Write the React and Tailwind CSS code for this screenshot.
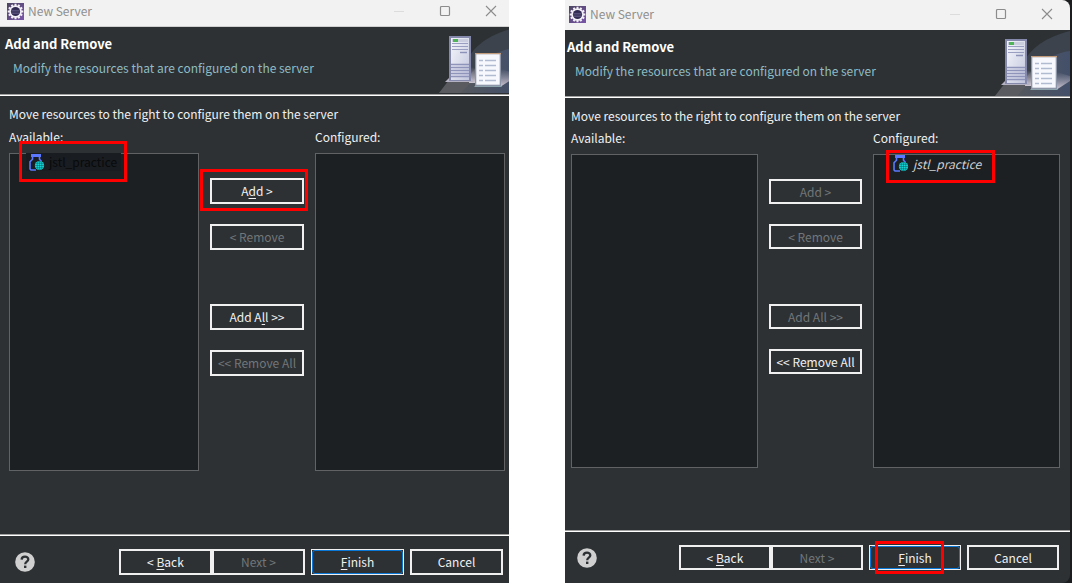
import React from "react";

function EclipseIcon() {
  const teeth = Array.from({ length: 12 }, (_, i) => i * 30);
  return (
    <svg width="17" height="17" viewBox="0 0 17 17" className="shrink-0" aria-hidden="true">
      <defs>
        <linearGradient id="ecl" x1="0" y1="0" x2="1" y2="1">
          <stop offset="0" stopColor="#4b4560" />
          <stop offset="1" stopColor="#7a55ab" />
        </linearGradient>
      </defs>
      <rect width="17" height="17" fill="url(#ecl)" />
      {teeth.map((a) => (
        <rect key={a} x="7.5" y="0.7" width="2" height="3" fill="#f1eef5" transform={`rotate(${a} 8.5 8.5)`} />
      ))}
      <circle cx="8.5" cy="8.5" r="6.3" fill="#f1eef5" />
      <circle cx="8.5" cy="8.5" r="4.6" fill="#2f2850" />
      <path d="M4.4 7.4h8.2M4.1 9h8.8M4.7 10.6h7.6" stroke="#6d6690" strokeWidth="0.7" />
    </svg>
  );
}

function ServerArt({ width }) {
  return (
    <svg width={width} height="66" viewBox={`0 0 ${width} 66`} className="block shrink-0 self-start" aria-hidden="true">
      <defs>
        <linearGradient id="beam" x1="0" y1="0" x2="1" y2="0">
          <stop offset="0" stopColor="#55585d" />
          <stop offset="1" stopColor="#43506a" />
        </linearGradient>
        <linearGradient id="tower" x1="0" y1="0" x2="1" y2="1">
          <stop offset="0" stopColor="#f4f5fb" />
          <stop offset="1" stopColor="#c3c7dd" />
        </linearGradient>
        <linearGradient id="glow" x1="0" y1="0" x2="0" y2="1">
          <stop offset="0" stopColor="#b9b3c4" stopOpacity="0" />
          <stop offset="1" stopColor="#cfc8d4" />
        </linearGradient>
      </defs>
      <path d="M75 1C44 9 34 22 26 36L0 66h75z" fill="#3c434c" />
      <path d="M75 21C48 25 32 42 20 66h55z" fill="url(#beam)" />
      <path d="M0 66L10 53h24l-12 13z" fill="#5a5b60" />
      <path d="M32 40l6 2v14h-8z" fill="url(#glow)" />
      <path d="M62 42l13 4v5l-14 9z" fill="url(#glow)" />
      <path d="M6 55l4-4h22l3 4z" fill="#b4b2c2" />
      <rect x="10" y="9" width="22" height="45" fill="#8589ab" />
      <rect x="12" y="11" width="18" height="42" fill="url(#tower)" />
      <path d="M13 16.5h16M13 19.5h16M13 22.5h16" stroke="#9a9ec0" />
      <rect x="13" y="12" width="16" height="3" fill="#c9cddd" />
      <rect x="14" y="12" width="5" height="3" fill="#4fb457" />
      <path d="M21 25.5h7" stroke="#8d92b8" strokeWidth="1.4" />
      <path d="M12 37.5h18M12 40.5h18M12 43.5h18M12 46.5h18M12 49.5h18" stroke="#8f94bb" strokeWidth="1.3" />
      <path d="M35 60l3-3h23l2 3z" fill="#8fa5ad" />
      <rect x="36" y="26" width="26" height="33" fill="#8d95a8" />
      <rect x="36" y="26" width="26" height="1.3" fill="#c39c7b" />
      <rect x="37.3" y="27.3" width="23.4" height="30.4" fill="#f6f8fd" />
      <path d="M40 33.5h4M46 33.5h11M40 38.5h4M46 38.5h11M40 43.5h4M46 43.5h11M40 48.5h4M46 48.5h11M40 53.5h4M46 53.5h11" stroke="#b0bbd2" strokeWidth="1.6" />
    </svg>
  );
}

function ModuleIcon() {
  return (
    <svg width="16" height="17" viewBox="0 0 16 17" className="shrink-0" aria-hidden="true">
      <rect x="2" y="0" width="10" height="3" fill="#5b78ff" />
      <path d="M3.500 3v2.200L1 7.800V15l1 1H7M10.500 3v2.200L12.500 7.500" fill="none" stroke="#5b78ff" strokeWidth="1.600" />
      <circle cx="10.500" cy="11.500" r="4.600" fill="#10d8d8" />
      <path d="M6 11.500h9M10.500 7v9M7 9.300h7M7 13.700h7" stroke="#14555c" strokeWidth="0.500" />
      <ellipse cx="10.500" cy="11.500" rx="2.300" ry="4.500" fill="none" stroke="#14555c" strokeWidth="0.500" />
    </svg>
  );
}

function Mark({ className }) {
  return <span aria-hidden="true" className={`pointer-events-none absolute z-10 border-[3px] border-[#ff0000] ${className}`} />;
}

function Btn({ children, disabled, primary, className = "" }) {
  return (
    <button
      type="button"
      disabled={disabled}
      className={`relative flex items-center justify-center whitespace-nowrap ${disabled ? "text-[#727678]" : "text-[#f0f0f0]"} ${
        primary ? "border border-[#f0f0f0]" : "border-2 border-[#f0f0f0]"
      } ${className}`}
    >
      {primary && <span aria-hidden="true" className="absolute inset-0 rounded-[3px] border border-[#0a78d7]" />}
      {children}
    </button>
  );
}

function U({ children }) {
  return <span className="underline underline-offset-2">{children}</span>;
}

function WindowControls({ className }) {
  return (
    <div className={`flex items-center gap-[34px] text-[#8c8c8c] ${className}`}>
      <button type="button" aria-label="Minimize" disabled className="text-[#dcdcdc]">
        <svg width="12" height="12" viewBox="0 0 12 12"><path d="M1 6.500h10" stroke="currentColor" /></svg>
      </button>
      <button type="button" aria-label="Maximize">
        <svg width="12" height="12" viewBox="0 0 12 12"><rect x="1.500" y="1.500" width="9" height="9" rx="1" fill="none" stroke="currentColor" strokeWidth="1.200" /></svg>
      </button>
      <button type="button" aria-label="Close">
        <svg width="12" height="12" viewBox="0 0 12 12"><path d="M1 1l10 10M11 1L1 11" stroke="currentColor" strokeWidth="1.100" /></svg>
      </button>
    </div>
  );
}

function List({ label, id, children }) {
  return (
    <section aria-labelledby={id} className="flex min-w-0 flex-col">
      <h3 id={id} className="mb-2 h-4 leading-4">{label}</h3>
      <div className="relative flex-1 border border-[#606263] bg-[#1c2022]">{children}</div>
    </section>
  );
}

function Separator() {
  return <div className="h-[2px] shrink-0 border-t border-b border-t-[#a0a0a0] border-b-white" />;
}

function Dialog({ second }) {
  const p = second ? "b" : "a";
  const side = second ? "h-[25px] w-full" : "h-[26px] w-full";
  const foot = second ? "h-[25px] w-[92px]" : "h-[26px] w-[93px]";
  return (
    <section
      aria-label="New Server"
      className={`flex min-w-0 flex-col bg-[#2d3134] text-[12px] text-[#f0f0f0] ${second ? "overflow-hidden rounded-tr-lg rounded-br-lg" : ""}`}
    >
      <header className={`flex shrink-0 items-center bg-[#f2f2f2] text-[#8f8f8f] ${second ? "h-[30px] pb-[2px] pl-1" : "h-[27px] border-b border-[#d0d0d0] pb-1 pl-[7px]"}`}>
        <EclipseIcon />
        <h1 className="ml-1">New Server</h1>
        <WindowControls className={`ml-auto ${second ? "pr-[17px]" : "pr-3"}`} />
      </header>

      <div className={`flex shrink-0 justify-between ${second ? "h-[66px]" : "h-[67px]"}`}>
        <div className={second ? "pt-[9px] pl-[2px]" : "pt-[9px] pl-[5px]"}>
          <h2 className="text-[13px] font-bold leading-4 text-white">Add and Remove</h2>
          <p className="mt-2 pl-2 leading-4 text-[#8fbcc4]">Modify the resources that are configured on the server</p>
        </div>
        <ServerArt width={second ? 75 : 70} />
      </div>
      <Separator />

      <main className={`flex flex-1 flex-col pt-[10px] ${second ? "pr-[10px] pb-[62px] pl-[6px]" : "pr-1 pb-[63px] pl-[9px]"}`}>
        <p className={`h-4 leading-4 ${second ? "mb-[6px]" : "mb-[7px]"}`}>Move resources to the right to configure them on the server</p>
        <div className={`grid flex-1 gap-[11px] ${second ? "grid-cols-[1fr_93px_1fr]" : "grid-cols-[1fr_94px_1fr]"}`}>
          <List label="Available:" id={`${p}-available`}>
            {!second && (
              <>
                <div className="absolute -top-px left-4 flex h-[18px] items-center gap-1 bg-[#191c20] pr-1 pl-[3px] text-[#080a0b]">
                  <ModuleIcon />
                  <span>jstl_practice</span>
                </div>
                <Mark className="-top-[13px] left-[9px] h-[41px] w-[108px]" />
              </>
            )}
          </List>
          <div className="flex flex-col pt-[49px]">
            <div className="relative">
              <Btn disabled={second} className={side}>
                {second ? "Add >" : <span>A<U>d</U>d &gt;</span>}
              </Btn>
              {!second && <Mark className="-top-[9px] -left-[10px] h-[42px] w-[108px]" />}
            </div>
            <Btn disabled className={`mt-5 ${side}`}>&lt; Remove</Btn>
            <Btn disabled={second} className={`${second ? "mt-[55px]" : "mt-[54px]"} ${side}`}>
              {second ? "Add All >>" : <span>Add A<U>l</U>l &gt;&gt;</span>}
            </Btn>
            <Btn disabled={!second} className={`mt-5 ${side}`}>
              {second ? <span>&lt;&lt; Re<U>m</U>ove All</span> : "<< Remove All"}
            </Btn>
          </div>
          <List label="Configured:" id={`${p}-configured`}>
            {second && (
              <>
                <div className="absolute top-0 left-[19px] flex h-[17px] items-center gap-1 text-[#d0d0d0] italic">
                  <ModuleIcon />
                  <span>jstl_practice</span>
                </div>
                <Mark className="-top-[5px] left-3 h-[33px] w-[109px]" />
              </>
            )}
          </List>
        </div>
      </main>

      <Separator />
      <footer className={`flex shrink-0 items-center ${second ? "h-[51px] pr-[11px] pl-3" : "h-[47px] pt-1 pr-[6px] pl-[15px]"}`}>
        <button type="button" aria-label="Help" className="mr-auto">
          <svg width="20" height="20" viewBox="0 0 20 20" className="block">
            <circle cx="10" cy="10" r="9.800" fill="#d0d0d0" />
            <path d="M6.600 7.600C6.800 3.600 13.400 3.800 13.300 7.500C13.200 9.700 10.200 9.700 10.200 12.200" fill="none" stroke="#2d3134" strokeWidth="2.300" />
            <rect x="9" y="13.600" width="2.400" height="2.400" fill="#2d3134" />
          </svg>
        </button>
        <Btn className={foot}><span>&lt; <U>B</U>ack</span></Btn>
        <Btn disabled className={foot}>Next &gt;</Btn>
        <div className="relative ml-[6px]">
          <Btn primary className={foot}><span><U>F</U>inish</span></Btn>
          {second && <Mark className="-top-1 left-[6px] h-[33px] w-[69px]" />}
        </div>
        <Btn className={`ml-[6px] ${foot}`}>Cancel</Btn>
      </footer>
    </section>
  );
}

export default function App() {
  return (
    <div className="grid min-h-screen grid-cols-[509fr_507fr] gap-14 bg-white font-['Noto_Sans_CJK_KR','Noto_Sans',sans-serif]">
      <Dialog />
      <div className="grid bg-[#1b1d1f] pr-[2px]">
        <Dialog second />
      </div>
    </div>
  );
}
